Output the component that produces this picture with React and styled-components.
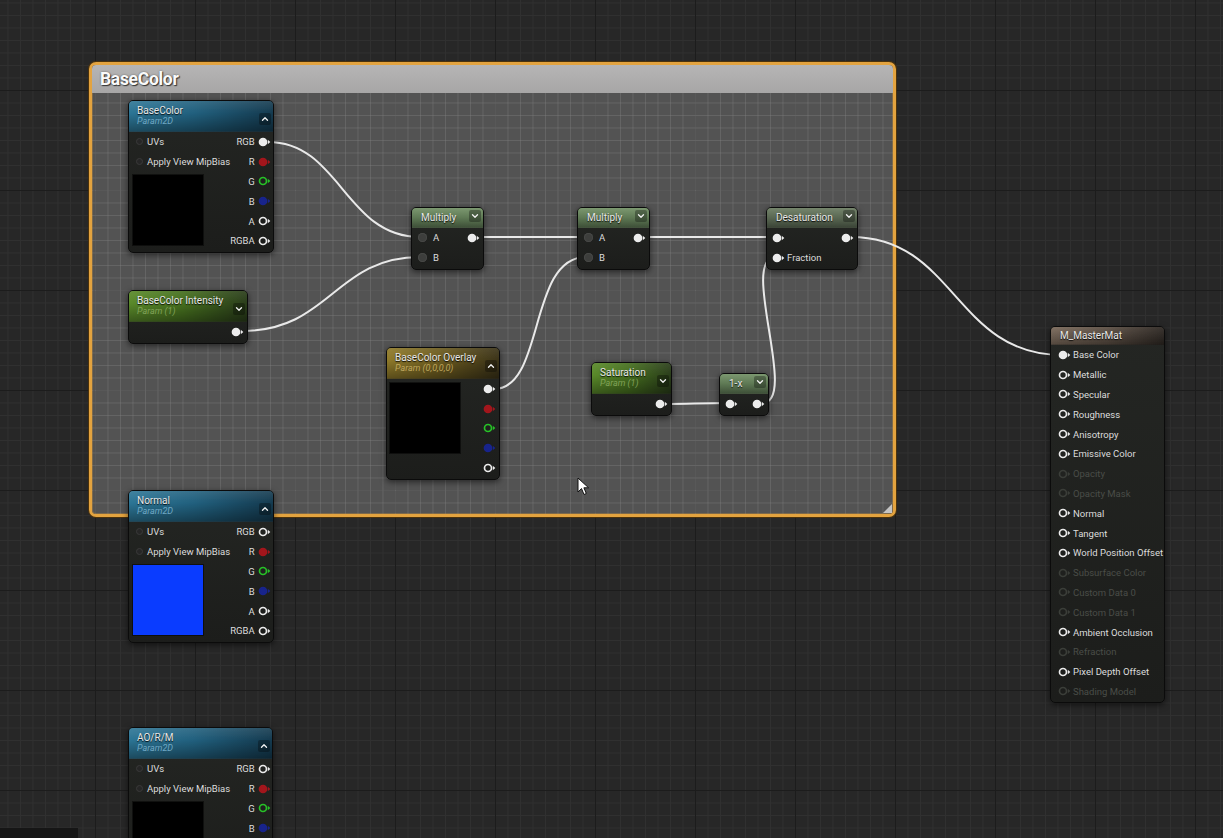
import React from 'react';
import styled, { createGlobalStyle } from 'styled-components';
import { ChevronUp, ChevronDown } from 'lucide-react';

const ROW = 19.8;

const GlobalStyle = createGlobalStyle`
  html, body {
    margin: 0;
    padding: 0;
    background: #262626;
  }
  body {
    font-family: Roboto, "Noto Sans", "Liberation Sans", sans-serif;
    overflow: hidden;
  }
`;

const tones = {
  blue: {
    bg: `linear-gradient(180deg, rgba(255,255,255,0.10) 0%, rgba(0,0,0,0) 40%, rgba(0,0,0,0.35) 100%),
         linear-gradient(90deg, #2c7595 0%, #21607e 45%, #143a4f 100%)`,
    sub: '#7db6d3',
  },
  green: {
    bg: `linear-gradient(180deg, rgba(255,255,255,0.08) 0%, rgba(0,0,0,0) 40%, rgba(0,0,0,0.35) 100%),
         linear-gradient(90deg, #5a8a2a 0%, #46701f 45%, #2a3d1a 100%)`,
    sub: '#8cad62',
  },
  yellow: {
    bg: `linear-gradient(180deg, rgba(255,255,255,0.08) 0%, rgba(0,0,0,0) 40%, rgba(0,0,0,0.35) 100%),
         linear-gradient(90deg, #8f7a2a 0%, #6e5d20 45%, #3b3318 100%)`,
    sub: '#cdb467',
  },
  op: {
    bg: `linear-gradient(180deg, #7c9870 0%, #5f7a55 50%, #3f5139 100%)`,
    sub: '#aaa',
  },
  desat: {
    bg: `linear-gradient(180deg, #75856c 0%, #5a6853 50%, #3c4638 100%)`,
    sub: '#aaa',
  },
  result: {
    bg: `linear-gradient(180deg, rgba(255,255,255,0.06) 0%, rgba(0,0,0,0.3) 100%),
         linear-gradient(90deg, #7b6a5b 0%, #5c4f44 50%, #2e2823 100%)`,
    sub: '#aaa',
  },
};

const Canvas = styled.div`
  position: relative;
  width: 1223px;
  height: 838px;
  overflow: hidden;
  background-color: #272727;
  background-image:
    linear-gradient(90deg, #1c1c1c 1px, transparent 1px),
    linear-gradient(180deg, #1c1c1c 1px, transparent 1px),
    linear-gradient(90deg, #303030 1px, transparent 1px),
    linear-gradient(180deg, #303030 1px, transparent 1px);
  background-size: 100px 100px, 100px 100px, 12.5px 12.5px, 12.5px 12.5px;
  background-position: 95px 0, 0 90px, 7.5px 0, 0 2.5px;
`;

const CornerBlock = styled.div`
  position: absolute;
  left: 0;
  bottom: 0;
  width: 78px;
  height: 10px;
  background: #161616;
`;

const Comment = styled.div`
  position: absolute;
  left: ${p => p.$x}px;
  top: ${p => p.$y}px;
  width: ${p => p.$w}px;
  height: ${p => p.$h}px;
  box-sizing: border-box;
  border: 3px solid #e3a33f;
  border-radius: 7px;
  box-shadow: 0 0 0 1px rgba(80, 52, 10, 0.9), inset 0 0 0 1px rgba(130, 88, 24, 0.7);
  display: flex;
  flex-direction: column;
  overflow: hidden;
`;

const CommentHeader = styled.div`
  height: 28px;
  flex: none;
  background: linear-gradient(180deg, #b6b5b5 0%, #a7a6a6 100%);
  display: flex;
  align-items: center;
  padding-left: 8px;
  font: 700 17.5px Roboto, "Liberation Sans", sans-serif;
  letter-spacing: -0.3px;
  color: #fafafa;
  text-shadow: 1px 1px 1px #333, 0 0 2px rgba(0, 0, 0, 0.45);
`;

const CommentBody = styled.div`
  flex: 1;
  position: relative;
  background-color: rgba(165, 165, 165, 0.35);
  background-image:
    linear-gradient(90deg, rgba(255, 255, 255, 0.07) 1px, transparent 1px),
    linear-gradient(180deg, rgba(255, 255, 255, 0.07) 1px, transparent 1px);
  background-size: 12.5px 12.5px, 12.5px 12.5px;
  background-position: 3px 0, 0 9.5px;
`;

const ResizeGrip = styled.div`
  position: absolute;
  right: 1px;
  bottom: 1px;
  width: 0;
  height: 0;
  border-left: 9px solid transparent;
  border-bottom: 9px solid #d8d8d8;
  opacity: 0.85;
`;

const WireLayer = styled.svg`
  position: absolute;
  left: 0;
  top: 0;
  pointer-events: none;
`;

const NodeBox = styled.div`
  position: absolute;
  left: ${p => p.$x}px;
  top: ${p => p.$y}px;
  width: ${p => p.$w}px;
  box-sizing: border-box;
  border: 1px solid #0b0b0b;
  border-radius: 5px;
  background: linear-gradient(180deg, #242623 0%, #1c1d1b 100%);
  box-shadow: 0 2px 6px rgba(0, 0, 0, 0.55);
  overflow: hidden;
  color: #dcdcdc;
  font-size: 9.5px;
`;

const Header = styled.div`
  height: ${p => p.$h}px;
  display: flex;
  align-items: ${p => (p.$small ? 'flex-start' : 'center')};
  justify-content: space-between;
  padding: ${p => (p.$small ? '0 2px 0 9px' : '0 2px 0 8px')};
  background: ${p => tones[p.$tone].bg};
  border-bottom: 1px solid rgba(0, 0, 0, 0.45);
  box-sizing: border-box;
`;

const HeaderText = styled.div`
  display: flex;
  flex-direction: column;
  justify-content: center;
  align-self: center;
  min-width: 0;
`;

const Title = styled.div`
  font-size: 10px;
  line-height: 11px;
  color: #e8e8e8;
  white-space: nowrap;
  text-shadow: 0 1px 1px rgba(0, 0, 0, 0.9);
`;

const Subtitle = styled.div`
  font-size: 9px;
  line-height: 11px;
  font-style: italic;
  color: ${p => tones[p.$tone].sub};
  white-space: nowrap;
  opacity: 0.85;
`;

const Collapse = styled.div`
  width: 12px;
  height: 12px;
  margin-top: ${p => (p.$small ? '2px' : '6px')};
  display: flex;
  align-items: center;
  justify-content: center;
  border-radius: 2px;
  background: rgba(0, 0, 0, 0.3);
  color: #f0f0f0;
  flex: none;
`;

const Body = styled.div`
  display: flex;
  justify-content: space-between;
  padding-bottom: 1px;
`;

const Column = styled.div`
  display: flex;
  flex-direction: column;
  align-items: ${p => (p.$right ? 'flex-end' : 'stretch')};
  padding: ${p => (p.$right ? '0 3px 0 0' : `0 0 0 ${p.$pad ?? 4}px`)};
`;

const Row = styled.div`
  height: ${ROW}px;
  display: flex;
  align-items: center;
  gap: ${p => p.$gap ?? 3}px;
  white-space: nowrap;
  color: ${p => (p.$dim ? '#4a4d48' : '#dcdcdc')};
`;

const TinyDot = styled.span`
  width: 5px;
  height: 5px;
  margin: 0 4px 0 3px;
  border-radius: 50%;
  background: #262626;
  border: 1px solid #3a3a3a;
  flex: none;
`;

const GreyPin = styled.span`
  width: 9px;
  height: 9px;
  border-radius: 50%;
  background: #3d3e3c;
  box-shadow: inset 0 0 0 1px #474846;
  flex: none;
`;

const Preview = styled.div`
  width: 70px;
  height: 70px;
  margin-top: ${p => p.$mt}px;
  background: ${p => p.$color};
  box-shadow: 0 0 0 1px rgba(0, 0, 0, 0.5);
`;

const Cursor = styled.svg`
  position: absolute;
  left: 577px;
  top: 477px;
`;

function PinIcon({ color = '#ececec', filled = false }) {
  return (
    <svg width="13" height="10" viewBox="0 0 13 10" style={{ flex: 'none' }}>
      <circle cx="5" cy="5" r="3.5" fill={filled ? color : 'none'} stroke={color} strokeWidth="1.7" />
      <path d="M9.8 2.8 L12.3 5 L9.8 7.2 Z" fill={color} />
    </svg>
  );
}

function NodeHeader({ tone, title, sub, up, h, small, noCollapse }) {
  const Chevron = up ? ChevronUp : ChevronDown;
  return (
    <Header $tone={tone} $h={h} $small={small}>
      <HeaderText>
        <Title>{title}</Title>
        {sub && <Subtitle $tone={tone}>{sub}</Subtitle>}
      </HeaderText>
      {!noCollapse && (
        <Collapse $small={small}>
          <Chevron size={10} strokeWidth={3.2} />
        </Collapse>
      )}
    </Header>
  );
}

const rgbaPins = [
  { label: 'R', color: '#a3161c', filled: true },
  { label: 'G', color: '#27c227' },
  { label: 'B', color: '#18248c', filled: true },
  { label: 'A', color: '#ececec' },
  { label: 'RGBA', color: '#ececec' },
];

function TextureNode({ x, y, w = 146, title, preview, rgbLinked }) {
  return (
    <NodeBox $x={x} $y={y} $w={w}>
      <NodeHeader tone="blue" title={title} sub="Param2D" up h={31} />
      <Body>
        <Column $pad={4}>
          <Row $gap={0}><TinyDot />UVs</Row>
          <Row $gap={0}><TinyDot />Apply View MipBias</Row>
          <Preview $color={preview} $mt={3.4} />
        </Column>
        <Column $right>
          <Row>RGB<PinIcon filled={rgbLinked} /></Row>
          {rgbaPins.map(p => (
            <Row key={p.label}>{p.label}<PinIcon color={p.color} filled={p.filled} /></Row>
          ))}
        </Column>
      </Body>
    </NodeBox>
  );
}

function ScalarNode({ x, y, w, title }) {
  return (
    <NodeBox $x={x} $y={y} $w={w}>
      <NodeHeader tone="green" title={title} sub="Param (1)" h={31} />
      <Body>
        <span />
        <Column $right>
          <Row><PinIcon filled /></Row>
        </Column>
      </Body>
    </NodeBox>
  );
}

function OverlayNode() {
  return (
    <NodeBox $x={386} $y={347} $w={114}>
      <NodeHeader tone="yellow" title="BaseColor Overlay" sub="Param (0,0,0,0)" up h={31} />
      <Body>
        <Column $pad={3}>
          <Preview $color="#000" $mt={4} />
        </Column>
        <Column $right>
          <Row><PinIcon filled /></Row>
          <Row><PinIcon color="#a3161c" filled /></Row>
          <Row><PinIcon color="#27c227" /></Row>
          <Row><PinIcon color="#18248c" filled /></Row>
          <Row><PinIcon /></Row>
        </Column>
      </Body>
    </NodeBox>
  );
}

function MultiplyNode({ x, y }) {
  return (
    <NodeBox $x={x} $y={y} $w={73}>
      <NodeHeader tone="op" title="Multiply" h={20} small />
      <Body>
        <Column $pad={6}>
          <Row $gap={6}><GreyPin />A</Row>
          <Row $gap={6}><GreyPin />B</Row>
        </Column>
        <Column $right>
          <Row><PinIcon filled /></Row>
        </Column>
      </Body>
    </NodeBox>
  );
}

function DesaturationNode() {
  return (
    <NodeBox $x={766} $y={207} $w={92}>
      <NodeHeader tone="desat" title="Desaturation" h={20} small />
      <Body>
        <Column $pad={5}>
          <Row><PinIcon filled /></Row>
          <Row $gap={2}><PinIcon filled />Fraction</Row>
        </Column>
        <Column $right>
          <Row><PinIcon filled /></Row>
        </Column>
      </Body>
    </NodeBox>
  );
}

function OneMinusNode() {
  return (
    <NodeBox $x={719} $y={373} $w={50}>
      <NodeHeader tone="op" title="1-x" h={20} small />
      <Body>
        <Column $pad={5}>
          <Row><PinIcon filled /></Row>
        </Column>
        <Column $right>
          <Row><PinIcon filled /></Row>
        </Column>
      </Body>
    </NodeBox>
  );
}

const materialInputs = [
  { label: 'Base Color', filled: true },
  { label: 'Metallic' },
  { label: 'Specular' },
  { label: 'Roughness' },
  { label: 'Anisotropy' },
  { label: 'Emissive Color' },
  { label: 'Opacity', dim: true },
  { label: 'Opacity Mask', dim: true },
  { label: 'Normal' },
  { label: 'Tangent' },
  { label: 'World Position Offset' },
  { label: 'Subsurface Color', dim: true },
  { label: 'Custom Data 0', dim: true },
  { label: 'Custom Data 1', dim: true },
  { label: 'Ambient Occlusion' },
  { label: 'Refraction', dim: true },
  { label: 'Pixel Depth Offset' },
  { label: 'Shading Model', dim: true },
];

function ResultNode() {
  return (
    <NodeBox $x={1050} $y={326} $w={115}>
      <NodeHeader tone="result" title="M_MasterMat" h={18} small noCollapse />
      <Body>
        <Column $pad={7}>
          {materialInputs.map(p => (
            <Row key={p.label} $dim={p.dim} $gap={2}>
              <PinIcon color={p.dim ? '#3b3e39' : '#ececec'} filled={p.filled} />
              {p.label}
            </Row>
          ))}
        </Column>
      </Body>
    </NodeBox>
  );
}

const wires = [
  'M268 142 C 340 142, 345 237, 420 237',
  'M242 331 C 330 331, 335 257, 420 257',
  'M476 237 L 585 237',
  'M494 389 C 545 389, 528 257, 586 257',
  'M642 237 L 775 237',
  'M665 404 C 690 404, 700 403, 729 403',
  'M762 403 C 800 403, 738 257, 776 257',
  'M851 237 C 955 237, 955 355, 1062 355',
];

export default function App() {
  return (
    <>
      <GlobalStyle />
      <Canvas>
        <Comment $x={89} $y={62} $w={807} $h={455}>
          <CommentHeader>BaseColor</CommentHeader>
          <CommentBody>
            <ResizeGrip />
          </CommentBody>
        </Comment>

        <WireLayer width="1223" height="838" viewBox="0 0 1223 838">
          {wires.map(d => (
            <path key={d} d={d} fill="none" stroke="#e9e9e9" strokeWidth="2" strokeLinecap="round" />
          ))}
        </WireLayer>

        <TextureNode x={128} y={100} title="BaseColor" preview="#000" rgbLinked />
        <ScalarNode x={128} y={290} w={120} title="BaseColor Intensity" />
        <MultiplyNode x={411} y={207} />
        <MultiplyNode x={577} y={207} />
        <DesaturationNode />
        <OverlayNode />
        <ScalarNode x={591} y={362} w={81} title="Saturation" />
        <OneMinusNode />
        <ResultNode />
        <TextureNode x={128} y={490} title="Normal" preview="#0a3cff" />
        <TextureNode x={128} y={727} w={145} title="AO/R/M" preview="#000" />

        <Cursor width="13" height="19" viewBox="0 0 13 19">
          <path d="M1 1 L1 15 L4.5 11.6 L7 17.5 L9.3 16.5 L6.9 10.8 L11.6 10.8 Z" fill="#fff" stroke="#111" strokeWidth="1" strokeLinejoin="round" />
        </Cursor>
        <CornerBlock />
      </Canvas>
    </>
  );
}
